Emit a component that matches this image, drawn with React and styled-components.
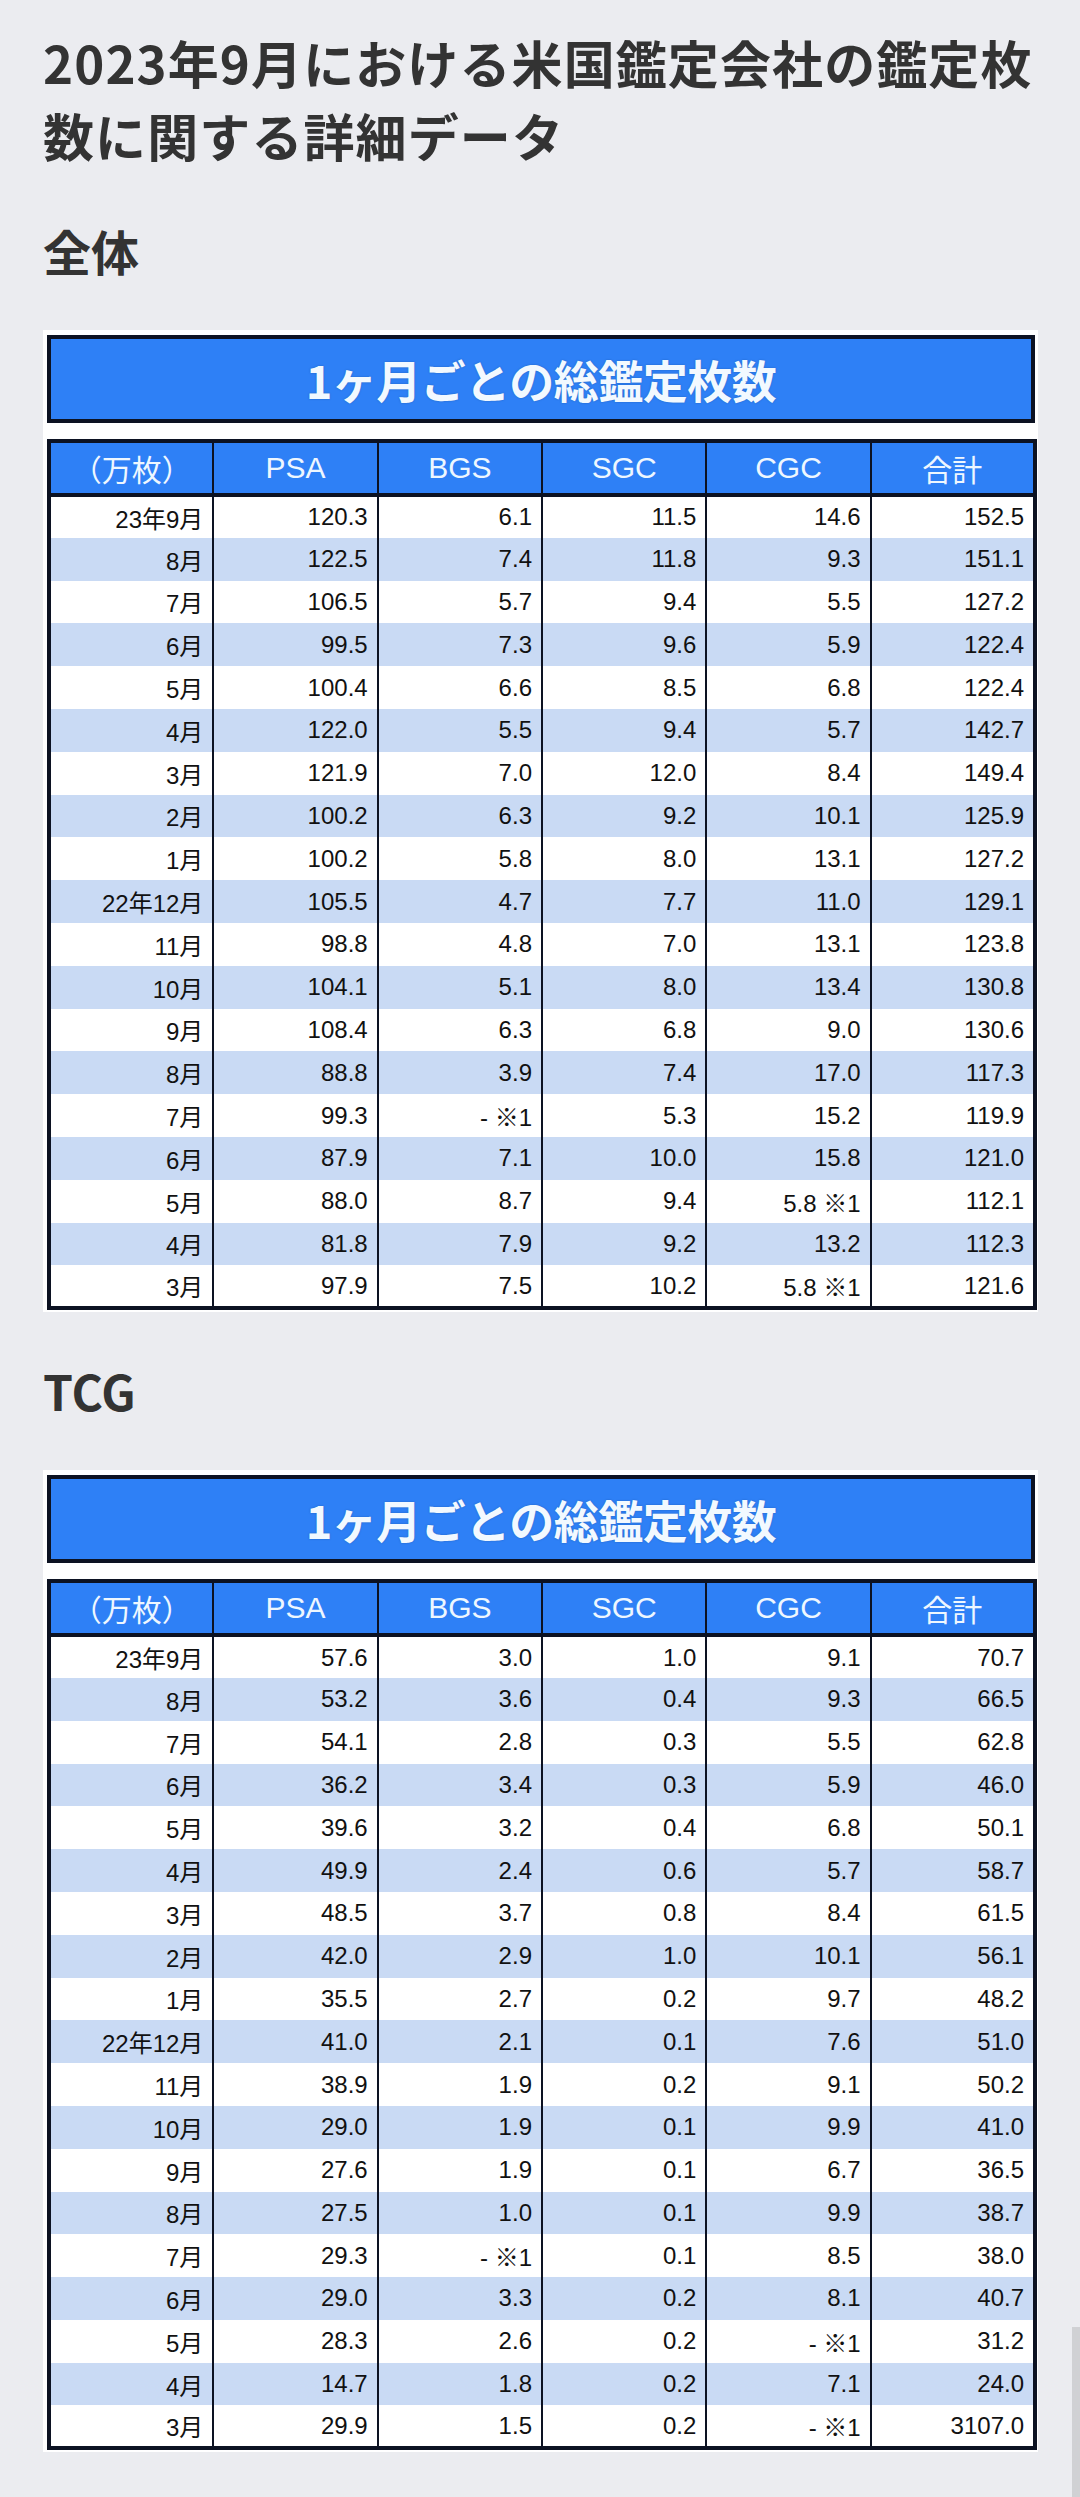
import React from "react";
import styled, { createGlobalStyle } from "styled-components";

const GlobalStyle = createGlobalStyle`
  html, body {
    margin: 0;
    padding: 0;
    background: #ebecf0;
  }
  * { box-sizing: border-box; }
`;

const Page = styled.div`
  position: relative;
  min-height: 2497px;
  padding: 26px 0 0 43px;
  background: #ebecf0;
  font-family: "Noto Sans CJK JP", "Noto Sans", sans-serif;
  color: #333333;
`;

const Title = styled.h1`
  margin: 0;
  font-size: 51px;
  line-height: 73px;
  font-weight: 700;
  color: #333333;
  letter-spacing: 1.1px;
`;

const SectionHeading = styled.h2`
  margin: 43px 0 0 0;
  font-size: 48px;
  line-height: 70px;
  font-weight: 700;
  color: #333333;
`;

const Figure = styled.div`
  margin-top: 45px;
  width: 995px;
  background: #ffffff;
  padding: 5px 3px 2px 4px;
  display: flex;
  flex-direction: column;
  gap: 16px;
`;

const TitleBar = styled.div`
  height: 88px;
  border: 4px solid #0c1222;
  background: #2e80f6;
  display: flex;
  align-items: center;
  justify-content: center;
  color: #f2f9ff;
  font-family: "Noto Sans CJK JP", sans-serif;
  font-weight: 700;
  font-size: 45px;
  letter-spacing: -0.5px;
  text-shadow: 0 0 2px rgba(10, 40, 90, 0.35);
`;

const Table = styled.table`
  width: 990px;
  border-collapse: collapse;
  table-layout: fixed;
  border: 4px solid #0c1222;
  font-family: "Liberation Sans", "Noto Sans CJK JP", sans-serif;
`;

const HeadCell = styled.th`
  height: 54px;
  padding: 0;
  background: #2e80f6;
  color: #eef7ff;
  font-weight: 400;
  font-size: 30px;
  text-align: center;
  border-right: 2px solid #0c1222;
  border-bottom: 4px solid #0c1222;
  &:last-child { border-right: none; }
`;

const Row = styled.tr`
  height: 42.8px;
  background: ${(p) => (p.$alt ? "#c9daf4" : "#ffffff")};
`;

const Cell = styled.td`
  padding: 0 9px 0 0;
  font-size: 24px;
  color: #111111;
  text-align: right;
  white-space: nowrap;
  border-right: 2px solid #0c1222;
  &:last-child { border-right: none; }
`;

const ScrollThumb = styled.div`
  position: absolute;
  right: 0;
  bottom: 0;
  width: 8px;
  height: 170px;
  background: #d0d1d4;
`;

const HEAD = ["（万枚）", "PSA", "BGS", "SGC", "CGC", "合計"];

const ALL = [
  ["23年9月", "120.3", "6.1", "11.5", "14.6", "152.5"],
  ["8月", "122.5", "7.4", "11.8", "9.3", "151.1"],
  ["7月", "106.5", "5.7", "9.4", "5.5", "127.2"],
  ["6月", "99.5", "7.3", "9.6", "5.9", "122.4"],
  ["5月", "100.4", "6.6", "8.5", "6.8", "122.4"],
  ["4月", "122.0", "5.5", "9.4", "5.7", "142.7"],
  ["3月", "121.9", "7.0", "12.0", "8.4", "149.4"],
  ["2月", "100.2", "6.3", "9.2", "10.1", "125.9"],
  ["1月", "100.2", "5.8", "8.0", "13.1", "127.2"],
  ["22年12月", "105.5", "4.7", "7.7", "11.0", "129.1"],
  ["11月", "98.8", "4.8", "7.0", "13.1", "123.8"],
  ["10月", "104.1", "5.1", "8.0", "13.4", "130.8"],
  ["9月", "108.4", "6.3", "6.8", "9.0", "130.6"],
  ["8月", "88.8", "3.9", "7.4", "17.0", "117.3"],
  ["7月", "99.3", "- ※1", "5.3", "15.2", "119.9"],
  ["6月", "87.9", "7.1", "10.0", "15.8", "121.0"],
  ["5月", "88.0", "8.7", "9.4", "5.8 ※1", "112.1"],
  ["4月", "81.8", "7.9", "9.2", "13.2", "112.3"],
  ["3月", "97.9", "7.5", "10.2", "5.8 ※1", "121.6"],
];

const TCG = [
  ["23年9月", "57.6", "3.0", "1.0", "9.1", "70.7"],
  ["8月", "53.2", "3.6", "0.4", "9.3", "66.5"],
  ["7月", "54.1", "2.8", "0.3", "5.5", "62.8"],
  ["6月", "36.2", "3.4", "0.3", "5.9", "46.0"],
  ["5月", "39.6", "3.2", "0.4", "6.8", "50.1"],
  ["4月", "49.9", "2.4", "0.6", "5.7", "58.7"],
  ["3月", "48.5", "3.7", "0.8", "8.4", "61.5"],
  ["2月", "42.0", "2.9", "1.0", "10.1", "56.1"],
  ["1月", "35.5", "2.7", "0.2", "9.7", "48.2"],
  ["22年12月", "41.0", "2.1", "0.1", "7.6", "51.0"],
  ["11月", "38.9", "1.9", "0.2", "9.1", "50.2"],
  ["10月", "29.0", "1.9", "0.1", "9.9", "41.0"],
  ["9月", "27.6", "1.9", "0.1", "6.7", "36.5"],
  ["8月", "27.5", "1.0", "0.1", "9.9", "38.7"],
  ["7月", "29.3", "- ※1", "0.1", "8.5", "38.0"],
  ["6月", "29.0", "3.3", "0.2", "8.1", "40.7"],
  ["5月", "28.3", "2.6", "0.2", "- ※1", "31.2"],
  ["4月", "14.7", "1.8", "0.2", "7.1", "24.0"],
  ["3月", "29.9", "1.5", "0.2", "- ※1", "3107.0"],
];

function DataFigure({ rows }) {
  return (
    <Figure>
      <TitleBar>1ヶ月ごとの総鑑定枚数</TitleBar>
      <Table>
        <thead>
          <tr>
            {HEAD.map((h) => (
              <HeadCell key={h}>{h}</HeadCell>
            ))}
          </tr>
        </thead>
        <tbody>
          {rows.map((r, i) => (
            <Row key={i} $alt={i % 2 === 1}>
              {r.map((c, j) => (
                <Cell key={j}>{c}</Cell>
              ))}
            </Row>
          ))}
        </tbody>
      </Table>
    </Figure>
  );
}

export default function App() {
  return (
    <>
      <GlobalStyle />
      <Page>
        <Title>2023年9月における米国鑑定会社の鑑定枚数に関する詳細データ</Title>
        <SectionHeading>全体</SectionHeading>
        <DataFigure rows={ALL} />
        <SectionHeading>TCG</SectionHeading>
        <DataFigure rows={TCG} />
        <ScrollThumb />
      </Page>
    </>
  );
}
